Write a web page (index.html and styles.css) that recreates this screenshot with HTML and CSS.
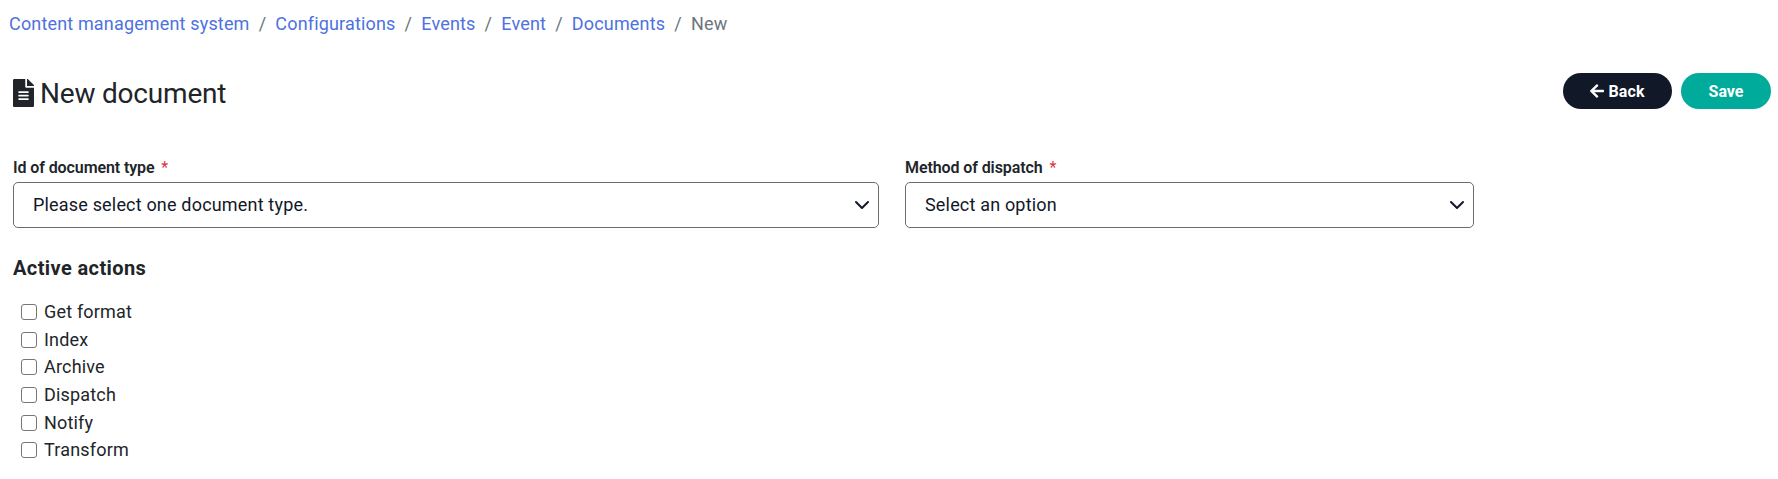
FILE: index.html
```html
<!DOCTYPE html>
<html lang="en">
<head>
<meta charset="utf-8">
<title>New document</title>
<link rel="stylesheet" href="styles.css">
</head>
<body>
<nav class="breadcrumb">
<a>Content management system</a><i>/</i><a>Configurations</a><i>/</i><a>Events</a><i>/</i><a>Event</a><i>/</i><a>Documents</a><i>/</i><span>New</span>
</nav>
<header class="header">
<h1 class="title"><svg class="file" viewBox="0 0 384 512"><path d="M224 136V0H24C10.700 0 0 10.700 0 24v464c0 13.300 10.700 24 24 24h336c13.300 0 24-10.700 24-24V160H248c-13.200 0-24-10.800-24-24zm64 236c0 6.600-5.400 12-12 12H108c-6.600 0-12-5.400-12-12v-8c0-6.600 5.400-12 12-12h168c6.600 0 12 5.400 12 12v8zm0-64c0 6.600-5.400 12-12 12H108c-6.600 0-12-5.400-12-12v-8c0-6.600 5.400-12 12-12h168c6.600 0 12 5.400 12 12v8zm0-72v8c0 6.600-5.400 12-12 12H108c-6.600 0-12-5.400-12-12v-8c0-6.600 5.400-12 12-12h168c6.600 0 12 5.400 12 12zm96-114.100v6.100H256V0h6.100c6.400 0 12.500 2.500 17 7l97.900 98c4.500 4.500 7 10.600 7 16.900z"/></svg><span>New document</span></h1>
<div class="actions">
<button class="btn dark"><svg class="arrow" viewBox="0 0 448 512"><path d="M257.500 445.100l-22.200 22.200c-9.400 9.400-24.600 9.400-33.900 0L7 273c-9.400-9.400-9.400-24.600 0-33.900L201.400 44.700c9.400-9.400 24.600-9.400 33.900 0l22.200 22.200c9.500 9.500 9.300 25-.4 34.300L136.600 216H424c13.300 0 24 10.700 24 24v32c0 13.300-10.700 24-24 24H136.600l120.500 114.800c9.800 9.300 10 24.800.4 34.300z"/></svg>Back</button>
<button class="btn green">Save</button>
</div>
</header>
<main class="form">
<div class="row">
<div class="field wide"><label class="label">Id of document type <b>*</b></label><div class="select"><span>Please select one document type.</span><svg class="chevron" viewBox="0 0 16 16"><path d="M2 5l6 6 6-6"/></svg></div></div>
<div class="field narrow"><label class="label">Method of dispatch <b>*</b></label><div class="select"><span>Select an option</span><svg class="chevron" viewBox="0 0 16 16"><path d="M2 5l6 6 6-6"/></svg></div></div>
</div>
<h2 class="subtitle">Active actions</h2>
<div class="checks">
<label class="check"><input type="checkbox">Get format</label>
<label class="check"><input type="checkbox">Index</label>
<label class="check"><input type="checkbox">Archive</label>
<label class="check"><input type="checkbox">Dispatch</label>
<label class="check"><input type="checkbox">Notify</label>
<label class="check"><input type="checkbox">Transform</label>
</div>
</main>
</body>
</html>
```
FILE: styles.css
```css
* { box-sizing: border-box; }
body { margin: 0; background: #fff; color: #212529; font: 400 18px/27px Roboto, sans-serif; letter-spacing: .18px; }
.breadcrumb { display: flex; padding: 10px 9px 0; color: #6c757d; }
.breadcrumb a { color: #4d72de; }
.breadcrumb i { font-style: normal; padding: 0 9.100px; }
.breadcrumb a, .breadcrumb i { letter-spacing: .16px; }
.header { display: flex; justify-content: space-between; padding: 36px 7px 0 13px; }
.title { display: flex; align-items: center; gap: 6px; margin: 4px 0 0; font-size: 28px; font-weight: 400; line-height: 34px; height: 34px; letter-spacing: -.2px; }
.file { width: 21px; height: 28px; margin-bottom: 3px; fill: #212529; }
.actions { display: flex; gap: 9px; }
.btn { display: flex; align-items: center; justify-content: center; height: 36px; padding: 1px 0 0; border: 0; border-radius: 18px; color: #fff; font: 700 16px/24px Roboto, sans-serif; }
.dark { width: 109px; background: #111827; gap: 4px; letter-spacing: .1px; }
.green { width: 90px; background: #00ab9b; }
.arrow { width: 14px; height: 16px; margin-bottom: 1px; fill: #fff; }
.form { padding: 45px 13px 0; }
.row { display: flex; gap: 26px; }
.wide { width: 866px; }
.narrow { width: 569px; }
.label { display: block; font-size: 16px; font-weight: 600; line-height: 24px; height: 26px; letter-spacing: -.1px; }
.label b { color: #dc3545; margin-left: 3px; font-weight: 400; }
.select { display: flex; align-items: center; justify-content: space-between; height: 46px; padding: 0 8px 1px 19px; border: 1px solid #6c6c6c; border-radius: 5px; color: #111827; }
.chevron { width: 16px; height: 16px; fill: none; stroke: #111827; stroke-width: 2; stroke-linecap: round; stroke-linejoin: round; }
.subtitle { margin: 26px 0 0; font-size: 20px; font-weight: 700; line-height: 28px; letter-spacing: .4px; }
.checks { padding: 16px 0 0 8px; }
.check { display: flex; align-items: center; height: 27.6px; }
.check input { appearance: none; width: 16px; height: 16px; margin: 1px 7px 0 0; border: 1px solid #767676; border-radius: 3px; }
```
